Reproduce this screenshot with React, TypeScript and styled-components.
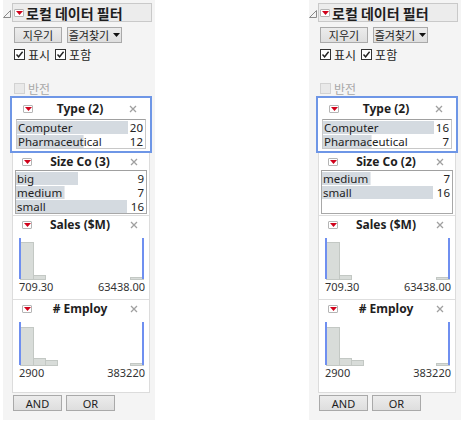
import React from "react";
import styled, { createGlobalStyle } from "styled-components";

const GlobalStyle = createGlobalStyle`
  html, body {
    margin: 0;
    padding: 0;
    background: #ffffff;
  }
  body {
    font-family: "Noto Sans", "Noto Sans CJK KR", sans-serif;
    color: #222222;
  }
`;

type Item = { label: string; count: number };
type Bar = { x: number; w: number; h: number };

type PanelData = {
  type: Item[];
  sizeTitle: string;
  size: Item[];
};

const LEFT: PanelData = {
  type: [
    { label: "Computer", count: 20 },
    { label: "Pharmaceutical", count: 12 },
  ],
  sizeTitle: "Size Co (3)",
  size: [
    { label: "big", count: 9 },
    { label: "medium", count: 7 },
    { label: "small", count: 16 },
  ],
};

const RIGHT: PanelData = {
  type: [
    { label: "Computer", count: 16 },
    { label: "Pharmaceutical", count: 7 },
  ],
  sizeTitle: "Size Co (2)",
  size: [
    { label: "medium", count: 7 },
    { label: "small", count: 16 },
  ],
};

const SALES_BARS: Bar[] = [
  { x: 1, w: 13, h: 38 },
  { x: 14, w: 12, h: 5 },
  { x: 111, w: 13, h: 3 },
];

const EMPLOY_BARS: Bar[] = [
  { x: 1, w: 13, h: 39 },
  { x: 14, w: 12, h: 8 },
  { x: 26, w: 12, h: 6 },
  { x: 111, w: 13, h: 3 },
];

const BAR_MAX = 111;

const RedMenu: React.FC = () => (
  <MenuBox>
    <svg width="7" height="4" viewBox="0 0 7 4">
      <path d="M0 0 L7 0 L3.5 4 Z" fill="#d0021b" />
    </svg>
  </MenuBox>
);

const Check: React.FC<{ disabled?: boolean; checked?: boolean }> = ({
  disabled,
  checked,
}) => (
  <CheckBox $disabled={disabled}>
    {checked ? (
      <svg width="9" height="9" viewBox="0 0 9 9">
        <path
          d="M1.5 4.5 L3.6 6.8 L7.6 1.8"
          fill="none"
          stroke="#222"
          strokeWidth="1.4"
        />
      </svg>
    ) : null}
  </CheckBox>
);

const Histogram: React.FC<{ bars: Bar[]; height: number }> = ({
  bars,
  height,
}) => (
  <svg width="126" height={height} viewBox={`0 0 126 ${height}`}>
    {bars.map((b, i) => (
      <rect
        key={i}
        x={b.x + 0.5}
        y={height - b.h + 0.5}
        width={b.w}
        height={b.h - 1}
        fill="#d8dcd9"
        stroke="#c3c8c4"
      />
    ))}
    <rect x="0" y="1" width="2" height={height - 2} fill="#6f8ff0" />
    <rect x="123" y="1" width="2" height={height - 2} fill="#6f8ff0" />
  </svg>
);

const ListBox: React.FC<{ items: Item[]; rows: number; inset?: boolean }> = ({
  items,
  rows,
  inset,
}) => {
  const max = Math.max(...items.map((i) => i.count));
  return (
    <List $rows={rows} $inset={inset}>
      {items.map((it) => (
        <ListRow key={it.label}>
          <ListLabel
            style={{ backgroundSize: `${(it.count / max) * BAR_MAX}px 100%` }}
          >
            {it.label}
          </ListLabel>
          <ListCount>{it.count}</ListCount>
        </ListRow>
      ))}
    </List>
  );
};

const Header: React.FC<{ title: string }> = ({ title }) => (
  <SectionHeader>
    <RedMenu />
    <SectionTitle>{title}</SectionTitle>
    <Close>
      <svg width="8" height="8" viewBox="0 0 8 8">
        <path d="M1 1 L7 7 M7 1 L1 7" stroke="#a0a0a0" strokeWidth="1.3" />
      </svg>
    </Close>
  </SectionHeader>
);

const FilterPanel: React.FC<{ data: PanelData }> = ({ data }) => (
  <Panel>
    <TitleRow>
      <Disclosure>
        <svg width="8" height="8" viewBox="0 0 8 8">
          <path d="M7.5 0.5 L7.5 7.5 L0.5 7.5 Z" fill="none" stroke="#8a8a8a" />
        </svg>
      </Disclosure>
      <TitleBox>
        <RedMenu />
        <TitleText>로컬 데이터 필터</TitleText>
      </TitleBox>
    </TitleRow>
    <ControlRow>
      <Button $w={48}>지우기</Button>
      <Button $w={55}>
        즐겨찾기
        <svg width="7" height="4" viewBox="0 0 7 4">
          <path d="M0 0 L7 0 L3.5 4 Z" fill="#111" />
        </svg>
      </Button>
    </ControlRow>
    <CheckRow>
      <Check checked />
      <CheckLabel>표시</CheckLabel>
      <Check checked />
      <CheckLabel>포함</CheckLabel>
    </CheckRow>
    <InvertRow>
      <Check disabled />
      <CheckLabel $disabled>반전</CheckLabel>
    </InvertRow>
    <FilterStack>
      <SelectedSection>
        <Header title="Type (2)" />
        <ListBox items={data.type} rows={2} inset />
      </SelectedSection>
      <Section>
        <Header title={data.sizeTitle} />
        <ListBox items={data.size} rows={3} />
      </Section>
      <Section>
        <Header title="Sales ($M)" />
        <HistWrap>
          <Histogram bars={SALES_BARS} height={43} />
          <RangeLabels>
            <span>709.30</span>
            <span>63438.00</span>
          </RangeLabels>
        </HistWrap>
      </Section>
      <Section $last>
        <Header title="# Employ" />
        <HistWrap>
          <Histogram bars={EMPLOY_BARS} height={45} />
          <RangeLabels>
            <span>2900</span>
            <span>383220</span>
          </RangeLabels>
        </HistWrap>
      </Section>
    </FilterStack>
    <LogicRow>
      <Button $w={49}>AND</Button>
      <Button $w={49}>OR</Button>
    </LogicRow>
  </Panel>
);

const App: React.FC = () => (
  <>
    <GlobalStyle />
    <Page>
      <FilterPanel data={LEFT} />
      <FilterPanel data={RIGHT} />
    </Page>
  </>
);

const Page = styled.div`
  display: flex;
  gap: 154px;
  padding-left: 3px;
  width: 461px;
  height: 422px;
  box-sizing: border-box;
`;

const Panel = styled.div`
  width: 152px;
  height: 420px;
  background: #f4f4f4;
  padding: 3px 3px 0 0;
  box-sizing: border-box;
  display: flex;
  flex-direction: column;
`;

const TitleRow = styled.div`
  display: flex;
  align-items: center;
  height: 19px;
`;

const Disclosure = styled.div`
  width: 9px;
  display: flex;
  align-items: center;
  padding-top: 2px;
`;

const TitleBox = styled.div`
  flex: 1;
  height: 19px;
  box-sizing: border-box;
  border: 1px solid #c9c9c9;
  background: #ececec;
  display: flex;
  align-items: center;
  gap: 2px;
  padding-left: 1px;
`;

const TitleText = styled.span`
  font-family: "Noto Sans CJK KR", sans-serif;
  font-weight: 700;
  font-size: 14px;
  color: #1e1e1e;
`;

const MenuBox = styled.span`
  width: 10px;
  height: 8px;
  box-sizing: border-box;
  border: 1px solid #b5b5b5;
  background: #ffffff;
  display: inline-flex;
  align-items: center;
  justify-content: center;
  border-radius: 1px;
`;

const ControlRow = styled.div`
  display: flex;
  gap: 5px;
  margin: 5px 0 0 11px;
`;

const Button = styled.div<{ $w: number }>`
  width: ${(p) => p.$w}px;
  height: 16px;
  box-sizing: border-box;
  border: 1px solid #a9a9a9;
  background: linear-gradient(#ececec, #dedede);
  display: flex;
  align-items: center;
  justify-content: center;
  gap: 4px;
  font-family: "Noto Sans", "Noto Sans CJK KR", sans-serif;
  font-size: 11px;
  color: #1e1e1e;
`;

const CheckRow = styled.div`
  display: flex;
  align-items: center;
  gap: 3px;
  margin: 5px 0 0 11px;
  height: 13px;
`;

const InvertRow = styled(CheckRow)`
  margin-top: 21px;
`;

const CheckBox = styled.span<{ $disabled?: boolean }>`
  width: 11px;
  height: 11px;
  box-sizing: border-box;
  border: 1px solid ${(p) => (p.$disabled ? "#d2d2d2" : "#333333")};
  background: ${(p) => (p.$disabled ? "#e9e9e9" : "#ffffff")};
  display: inline-flex;
  align-items: center;
  justify-content: center;
`;

const CheckLabel = styled.span<{ $disabled?: boolean }>`
  font-family: "Noto Sans CJK KR", sans-serif;
  font-size: 12px;
  color: ${(p) => (p.$disabled ? "#a8a8a8" : "#1e1e1e")};
  margin-right: 2px;
`;

const FilterStack = styled.div`
  margin: 1px 2px 0 9px;
  height: 297px;
  box-sizing: border-box;
  border: 1px solid #dcdcdc;
  border-top: none;
  background: #ffffff;
  display: flex;
  flex-direction: column;
`;

const SelectedSection = styled.div`
  margin: 0 -3px;
  border: 2px solid #6e96e6;
  padding: 2px 4px 2px 4px;
  display: flex;
  flex-direction: column;
  gap: 4px;
  background: #ffffff;
`;

const Section = styled.div<{ $last?: boolean }>`
  border-bottom: ${(p) => (p.$last ? "none" : "1px solid #dedede")};
  padding: 0 2px 1px;
  display: flex;
  flex-direction: column;
  gap: 2px;
`;

const SectionHeader = styled.div`
  display: grid;
  grid-template-columns: 24px 1fr 24px;
  align-items: center;
  height: 15px;
  padding: 0 0 0 7px;
`;

const SectionTitle = styled.span`
  text-align: center;
  font-weight: 700;
  font-size: 12px;
  color: #1e1e1e;
  margin-left: -9px;
`;

const Close = styled.span`
  display: flex;
  justify-content: center;
  align-items: center;
  margin-left: -3px;
`;

const List = styled.div<{ $rows: number; $inset?: boolean }>`
  height: ${(p) => p.$rows * 14 + 2}px;
  box-sizing: border-box;
  border: 1px solid ${(p) => (p.$inset ? "#c8c8c8" : "#a8a8a8")};
  border-top-color: #a0a0a0;
  padding: 0 2px 0 0;
  display: flex;
  flex-direction: column;
`;

const ListRow = styled.div`
  display: grid;
  grid-template-columns: ${BAR_MAX}px 1fr;
  height: 14px;
  align-items: center;
`;

const ListLabel = styled.span`
  height: 13px;
  line-height: 13px;
  padding-left: 1px;
  font-size: 11.5px;
  color: #222222;
  white-space: nowrap;
  background-image: linear-gradient(#d4dae0, #d4dae0);
  background-repeat: no-repeat;
`;

const ListCount = styled.span`
  text-align: right;
  font-size: 11.5px;
  color: #222222;
  line-height: 13px;
`;

const HistWrap = styled.div`
  display: flex;
  flex-direction: column;
  padding: 4px 0 0 4px;
  width: 126px;
`;

const RangeLabels = styled.div`
  display: flex;
  justify-content: space-between;
  font-size: 11px;
  color: #333333;
  line-height: 14px;
  padding-bottom: 4px;
`;

const LogicRow = styled.div`
  display: flex;
  gap: 4px;
  margin: 2px 0 0 10px;
`;

export default App;
